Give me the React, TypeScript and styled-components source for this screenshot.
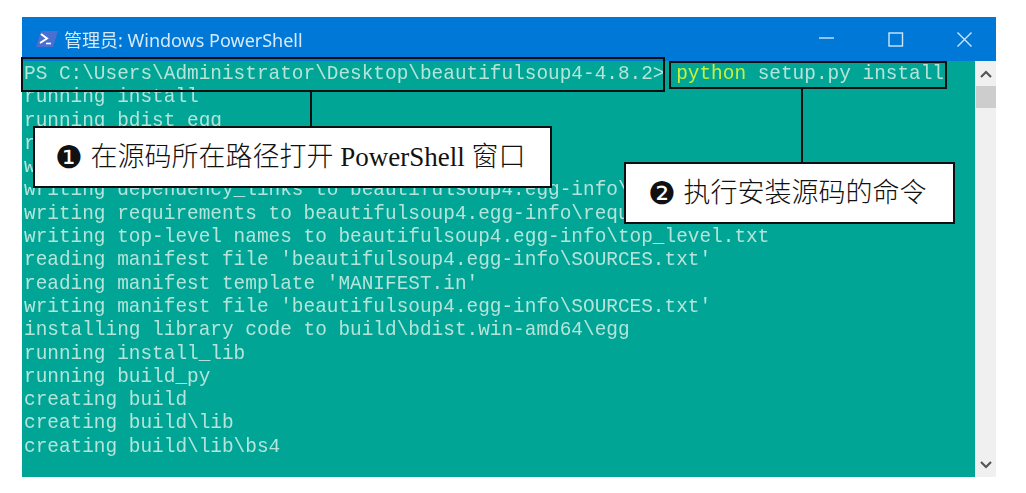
import styled, { createGlobalStyle } from "styled-components";

const GlobalStyle = createGlobalStyle`
  html, body {
    margin: 0;
    background: #fff;
  }
`;

const Page = styled.div`
  width: 1026px;
  height: 493px;
  padding: 17px 0 0 22px;
  box-sizing: border-box;
  overflow: hidden;
`;

const Window = styled.div`
  position: relative;
  display: flex;
  flex-direction: column;
  width: 974px;
  height: 460px;
`;

const TitleBar = styled.div`
  display: flex;
  align-items: center;
  flex: 0 0 44px;
  padding-left: 14px;
  background: #0078d7;
`;

const AppIcon = styled.svg`
  width: 22px;
  height: 18px;
  margin-right: 6px;
`;

const Title = styled.div`
  flex: 1;
  font-family: "Noto Sans", "Noto Sans CJK SC", sans-serif;
  font-size: 18px;
  color: #d5e9f8;
  filter: blur(0.3px);
  white-space: nowrap;
`;

const Controls = styled.div`
  display: flex;
  align-items: center;
  gap: 52px;
  padding-right: 23px;
`;

const ControlIcon = styled.svg`
  display: block;
  width: 17px;
  height: 17px;
  fill: none;
  stroke: #cfe6f8;
  stroke-width: 1.4;
`;

const Content = styled.div`
  display: flex;
  flex: 1;
  min-height: 0;
`;

const Terminal = styled.pre`
  flex: 1;
  margin: 0;
  padding: 2px 0 0 2px;
  overflow: hidden;
  background: #00a595;
  font-family: "Liberation Mono", monospace;
  font-size: 19.42px;
  line-height: 23.3px;
  color: #b4e4da;
  filter: blur(0.35px);
`;

const Command = styled.span`
  color: #c8f03c;
`;

const Scrollbar = styled.div`
  display: flex;
  flex-direction: column;
  flex: 0 0 21px;
  background: #f0f0f0;
`;

const ScrollButton = styled.div`
  display: flex;
  align-items: center;
  justify-content: center;
  flex: 0 0 25px;
`;

const Chevron = styled.svg`
  width: 12px;
  height: 8px;
  fill: none;
  stroke: #555;
  stroke-width: 2.2;
`;

const Thumb = styled.div`
  flex: 0 0 22px;
  margin-left: 1px;
  background: #cdcdcd;
`;

const Track = styled.div`
  flex: 1;
`;

const Outline = styled.div<{ $left: number; $top: number; $width: number; $height: number }>`
  position: absolute;
  left: ${(p) => p.$left}px;
  top: ${(p) => p.$top}px;
  width: ${(p) => p.$width}px;
  height: ${(p) => p.$height}px;
  box-sizing: border-box;
  border: 2px solid #0b0f12;
`;

const Connector = styled.div<{ $left: number; $top: number; $height: number }>`
  position: absolute;
  left: ${(p) => p.$left}px;
  top: ${(p) => p.$top}px;
  width: 2px;
  height: ${(p) => p.$height}px;
  background: #0b0f12;
`;

const Callout = styled.div<{ $left: number; $top: number; $width: number; $height: number }>`
  position: absolute;
  left: ${(p) => p.$left}px;
  top: ${(p) => p.$top}px;
  width: ${(p) => p.$width}px;
  height: ${(p) => p.$height}px;
  box-sizing: border-box;
  display: flex;
  align-items: center;
  justify-content: center;
  gap: 8px;
  padding-right: 5px;
  border: 2px solid #0b0f12;
  background: #fff;
  font-family: "Liberation Serif", "Noto Sans CJK SC", serif;
  font-size: 27px;
  font-weight: 300;
  line-height: 30px;
  color: #111;
  white-space: nowrap;
`;

const Bullet = styled.span`
  font-family: "DejaVu Sans", sans-serif;
  font-size: 31px;
  line-height: 30px;
`;

const LINES = [
  "running install",
  "running bdist_egg",
  "running egg_info",
  "writing beautifulsoup4.egg-info\\PKG-INFO",
  "writing dependency_links to beautifulsoup4.egg-info\\dependency_links.txt",
  "writing requirements to beautifulsoup4.egg-info\\requires.txt",
  "writing top-level names to beautifulsoup4.egg-info\\top_level.txt",
  "reading manifest file 'beautifulsoup4.egg-info\\SOURCES.txt'",
  "reading manifest template 'MANIFEST.in'",
  "writing manifest file 'beautifulsoup4.egg-info\\SOURCES.txt'",
  "installing library code to build\\bdist.win-amd64\\egg",
  "running install_lib",
  "running build_py",
  "creating build",
  "creating build\\lib",
  "creating build\\lib\\bs4",
];

function App() {
  return (
    <Page>
      <GlobalStyle />
      <Window>
        <TitleBar>
          <AppIcon viewBox="0 0 22 18">
            <path d="M5 1h17l-5 16H0z" fill="#4a6fd0" />
            <path d="M5 4l6 4.5L4 13" fill="none" stroke="#fff" strokeWidth="2" />
            <path d="M10 13.5h5" stroke="#fff" strokeWidth="1.6" />
          </AppIcon>
          <Title>管理员: Windows PowerShell</Title>
          <Controls>
            <ControlIcon viewBox="0 0 17 17">
              <path d="M1 7h15" />
            </ControlIcon>
            <ControlIcon viewBox="0 0 17 17">
              <rect x="2" y="2" width="13.5" height="13" />
            </ControlIcon>
            <ControlIcon viewBox="0 0 17 17">
              <path d="M1.5 1.5l14 14M15.5 1.5l-14 14" />
            </ControlIcon>
          </Controls>
        </TitleBar>
        <Content>
          <Terminal>
            {"PS C:\\Users\\Administrator\\Desktop\\beautifulsoup4-4.8.2> "}
            <Command>python</Command>
            {" setup.py install\n"}
            {LINES.join("\n")}
          </Terminal>
          <Scrollbar>
            <ScrollButton>
              <Chevron viewBox="0 0 12 8">
                <path d="M1 7l5-5 5 5" />
              </Chevron>
            </ScrollButton>
            <Thumb />
            <Track />
            <ScrollButton>
              <Chevron viewBox="0 0 12 8">
                <path d="M1 1l5 5 5-5" />
              </Chevron>
            </ScrollButton>
          </Scrollbar>
        </Content>
        <Outline $left={-1} $top={40} $width={644} $height={35} />
        <Outline $left={647} $top={44} $width={278} $height={28} />
        <Connector $left={288} $top={75} $height={35} />
        <Connector $left={779} $top={72} $height={74} />
        <Callout $left={11} $top={109} $width={519} $height={62}>
          <Bullet>❶</Bullet>
          <span>在源码所在路径打开 PowerShell 窗口</span>
        </Callout>
        <Callout $left={602} $top={145} $width={331} $height={62}>
          <Bullet>❷</Bullet>
          <span>执行安装源码的命令</span>
        </Callout>
      </Window>
    </Page>
  );
}

export default App;
